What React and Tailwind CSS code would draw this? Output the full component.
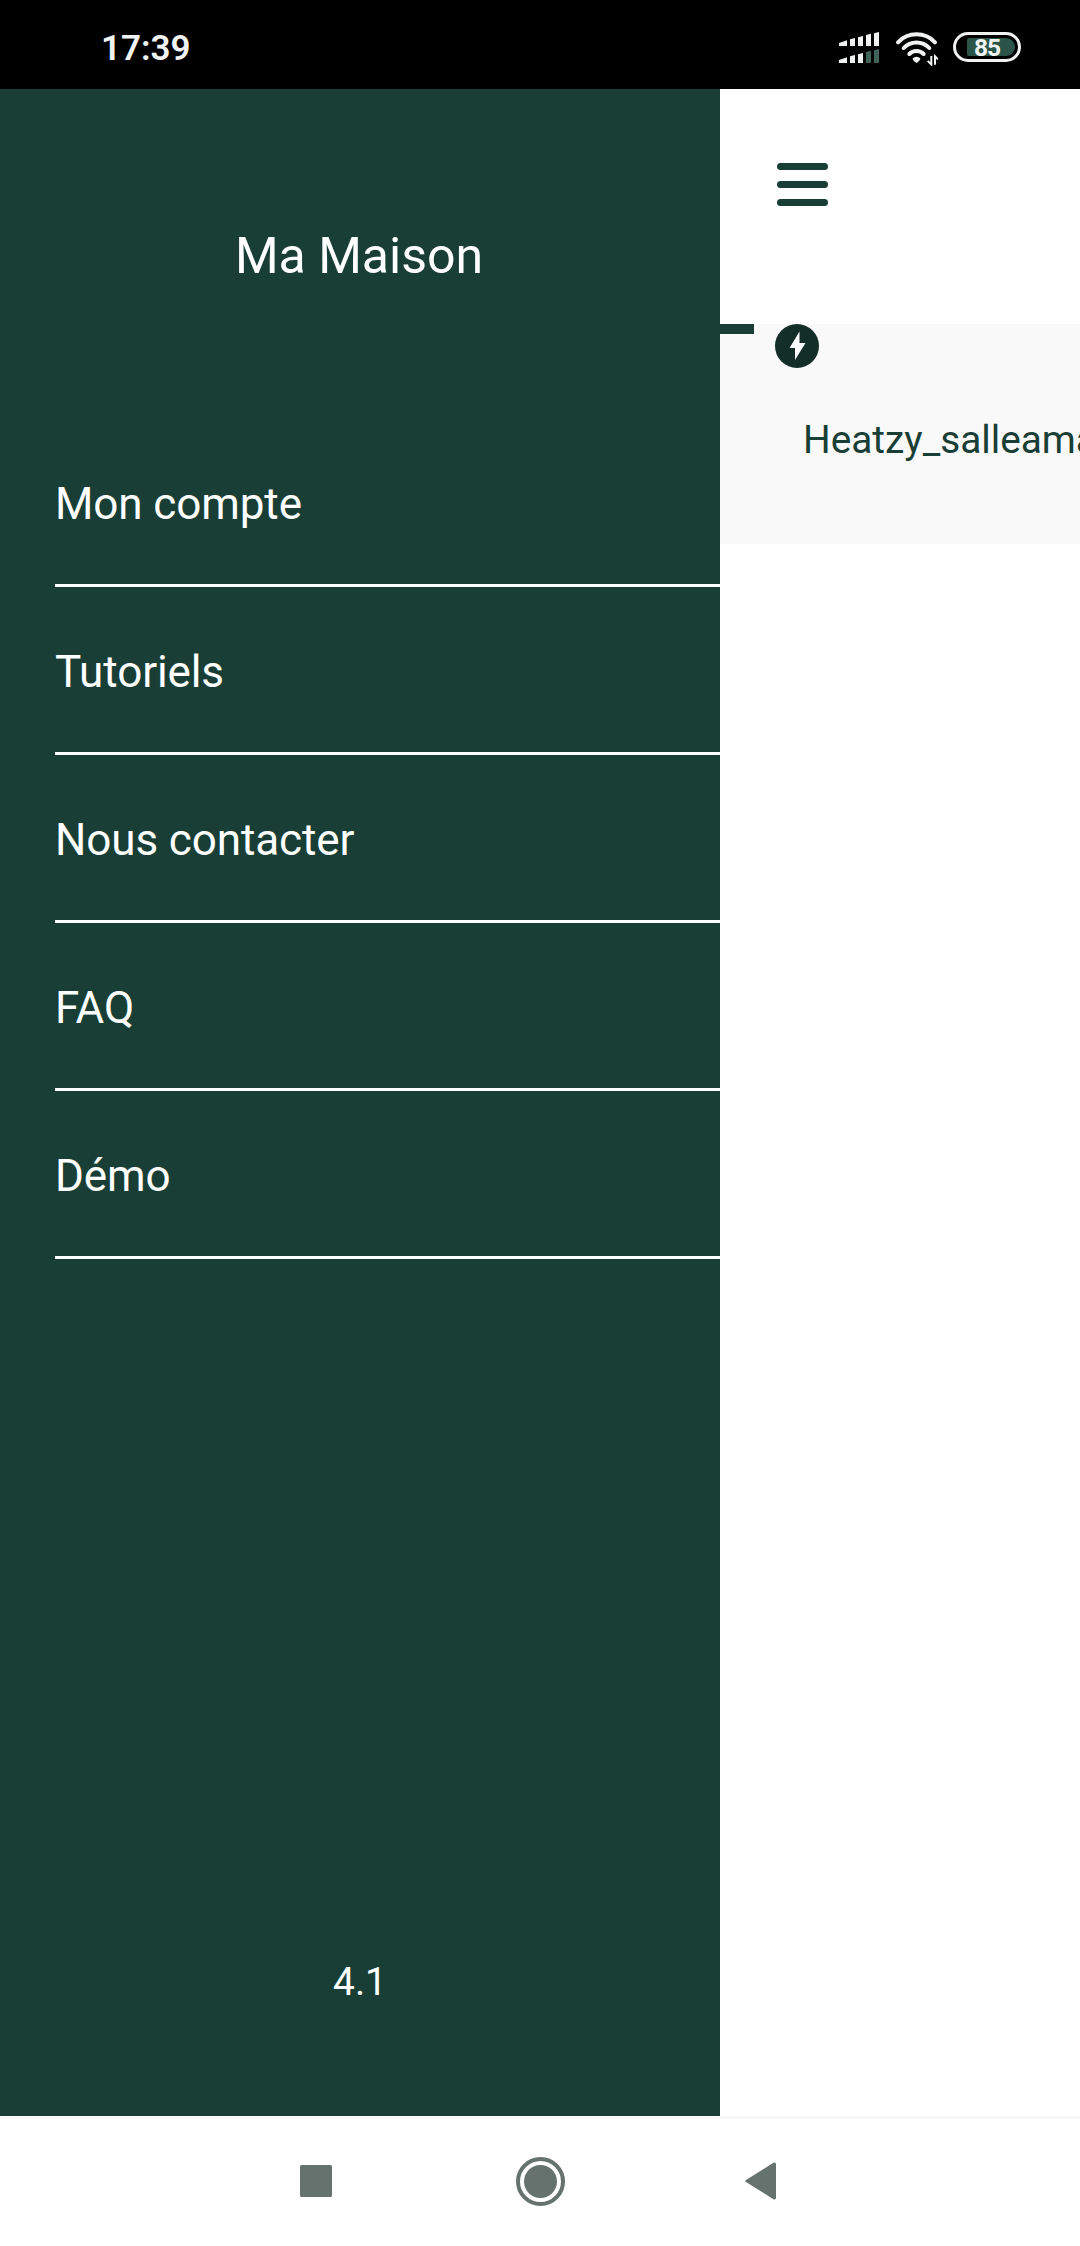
import React from 'react'

const menuItems = ["Mon compte", "Tutoriels", "Nous contacter", "FAQ", "Démo"]

const SignalIcon = () => (
  <svg width="40" height="32" viewBox="0 0 40 32" fill="#f1f3f2">
    <path d="M0 11l8-2.7V14H0zM11 7.3l5-1.3v8h-5zM19 5.3l5-1.3v10h-5zM27 3l5-1.3V14h-5zM35 1.3L40 0v14h-5z" />
    <path d="M0 28l8-2.7V31H0zM11 24.3l5-1.3v8h-5zM19 22.3l5-1.3v10h-5z" />
    <path d="M27 20l5-1.3V31h-5zM35 18.3l5-1.3v14h-5z" fill="#3f6459" />
  </svg>
)

const WifiIcon = () => (
  <svg width="43" height="34" viewBox="0 0 43 34" fill="none" stroke="#f1f3f2" strokeLinecap="round">
    <path d="M3 10.3a25.5 25.5 0 0 1 37 0" strokeWidth="4" />
    <path d="M8.7 16a17.5 17.5 0 0 1 25.6 0" strokeWidth="4" />
    <path d="M14.3 22a10 10 0 0 1 14.4 0" strokeWidth="4" />
    <path d="M17.7 26.2a5.4 5.4 0 0 1 7.6 0q.3 2-3.8 4.8q-4.1-2.8-3.8-4.8z" fill="#f1f3f2" stroke="none" />
    <path d="M36.3 24v8.5l-3.6-3.6M40 32.7v-8.5l3 3.2" strokeWidth="2" strokeLinecap="butt" />
  </svg>
)

const StatusBar = () => (
  <div className="flex h-[89px] shrink-0 items-start bg-black text-[#f1f3f2]">
    <span className="ml-[101px] mt-[29px] text-[35px] leading-[40px] font-semibold">17:39</span>
    <div className="mt-[32px] ml-auto mr-[59px] flex items-start">
      <SignalIcon />
      <div className="ml-[16px]"><WifiIcon /></div>
      <div className="relative ml-[15px] h-[30px] w-[68px] rounded-full border-[3px] border-[#f1f3f2]">
        <div className="absolute left-[11px] top-[3px] h-[18px] w-[48px] rounded-l-[2px] rounded-r-[9px] bg-[#2a5448]"></div>
        <span className="absolute left-0 top-0 w-full text-center text-[24.5px] leading-[25px] font-bold tracking-[-1px]">85</span>
      </div>
    </div>
  </div>
)

const Drawer = () => (
  <aside className="flex w-[720px] shrink-0 flex-col bg-[#183e35] text-white">
    <h1 className="mt-[138px] mr-[2px] text-center text-[50px] leading-[58px]">Ma Maison</h1>

    <ul className="mt-[134px] ml-[55px]">
      {menuItems.map((item) => (
        <li key={item} className="flex h-[168px] items-center border-b-[3px] border-white pt-[4px] text-[44px] leading-[52px] tracking-[-0.1px]">
          {item}
        </li>
      ))}
    </ul>

    <p className="mt-auto mb-[111px] text-center text-[38.8px] leading-[46px]">4.1</p>
  </aside>
)

const Home = () => (
  <main className="min-w-0 flex-1 overflow-hidden bg-white">
    <div className="flex h-[235px] flex-col gap-[11px] pt-[74px] pl-[57px]">
      <div className="h-[7px] w-[51px] rounded-full bg-[#183e35]"></div>
      <div className="h-[7px] w-[51px] rounded-full bg-[#183e35]"></div>
      <div className="h-[7px] w-[51px] rounded-full bg-[#183e35]"></div>
    </div>

    <div className="h-[220px] bg-[#f9f9f9]">
      <div className="flex items-start">
        <div className="h-[10px] w-[34px] bg-[#183e35]"></div>
        <svg className="ml-[21px]" width="44" height="44" viewBox="0 0 44 44">
          <circle cx="22" cy="22" r="22" fill="#122e27" />
          <path d="M24.5 7.5L14.5 24H20v12L30.5 19H24.5z" fill="#fff" />
        </svg>
      </div>
      {/* device name runs off the right side while the drawer is open */}
      <p className="mt-[49px] ml-[83px] whitespace-nowrap text-[38.8px] leading-[46px] text-[#183e35]">Heatzy_salleama</p>
    </div>
  </main>
)

const NavBar = () => (
  <div className="flex h-[130px] shrink-0 items-center border-t-[3px] border-[#f8f8f8] bg-white pb-[3px] pl-[300px]">
    <svg width="32" height="32" viewBox="0 0 32 32">
      <rect width="32" height="32" rx="1.5" fill="#66726e" />
    </svg>
    <svg className="mt-px ml-[184px]" width="49" height="49" viewBox="0 0 49 49">
      <circle cx="24.5" cy="24.5" r="22.5" fill="none" stroke="#66726e" strokeWidth="4" />
      <circle cx="24.5" cy="24.5" r="16.5" fill="#66726e" />
    </svg>
    <svg className="ml-[180px]" width="32" height="38" viewBox="0 0 32 38">
      <path d="M1 18L28.5 .8Q31-.5 31 2.500v33Q31 38.500 28.500 37.200L1 20Q-.5 19 1 18z" fill="#66726e" />
    </svg>
  </div>
)

const App = () => {
  return (
    <div className="flex h-[2246px] w-[1080px] flex-col overflow-hidden bg-white font-['Roboto',sans-serif]">
      <StatusBar />
      <div className="flex flex-1">
        <Drawer />
        <Home />
      </div>
      <NavBar />
    </div>
  )
}

export default App
